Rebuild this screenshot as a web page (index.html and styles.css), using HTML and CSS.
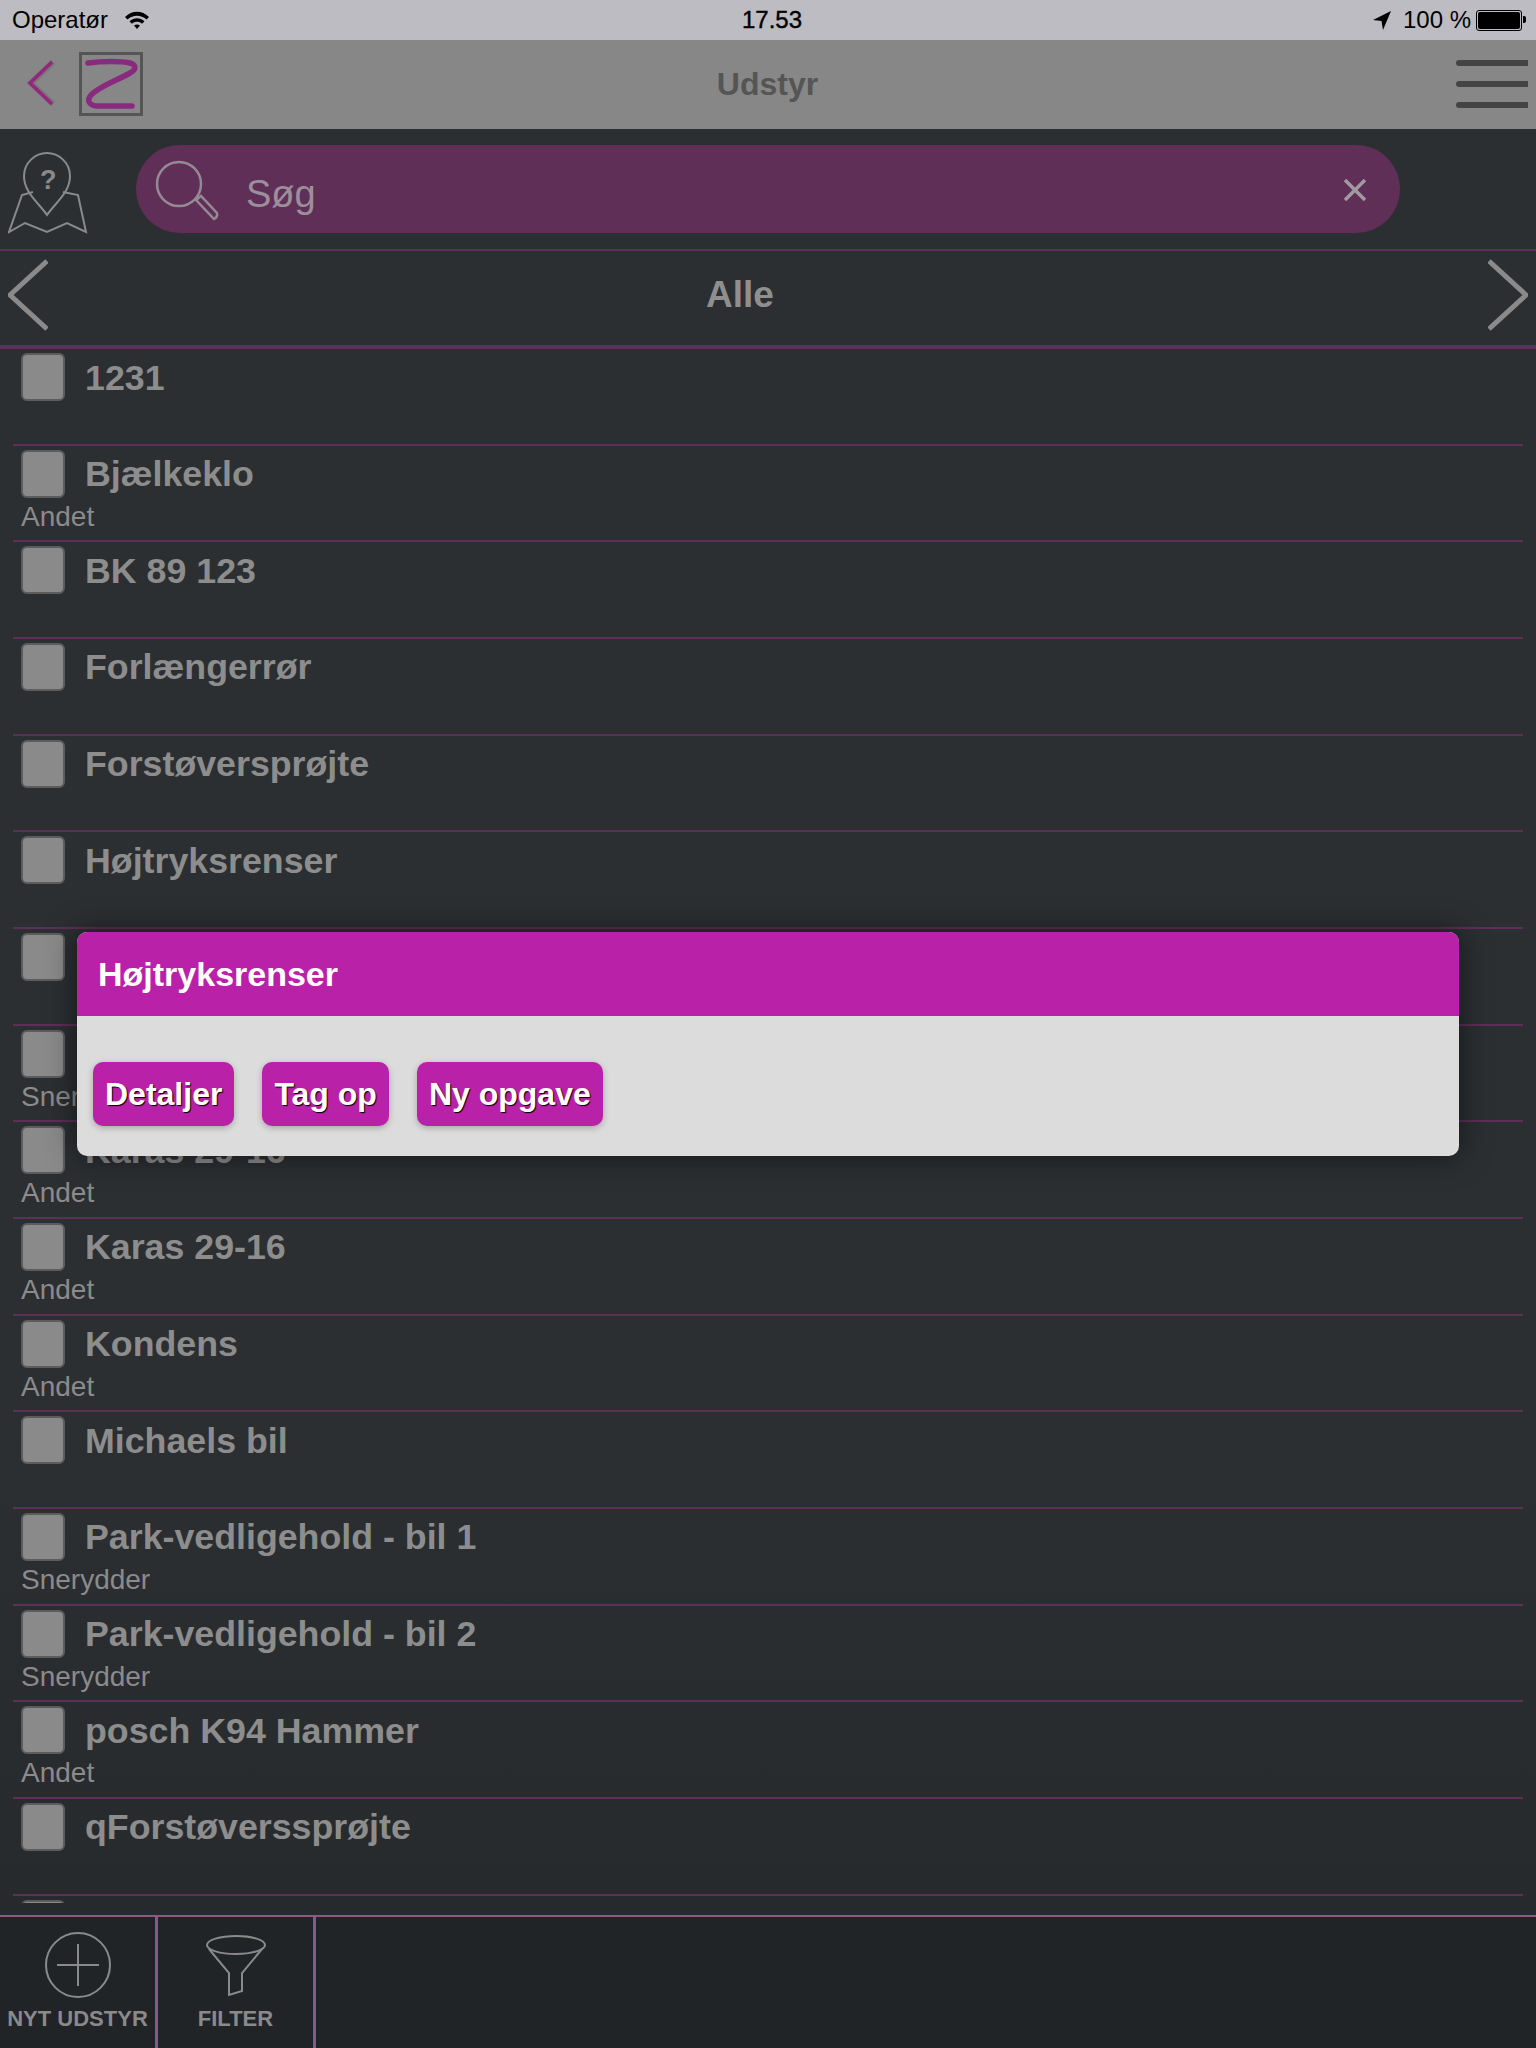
FILE: index.html
```html
<!DOCTYPE html>
<html lang="en">
<head>
    <meta charset="UTF-8">
    <meta name="viewport" content="width=device-width, initial-scale=1.0">
    <title>Udstyr</title>
    <link rel="stylesheet" href="styles.css">
</head>
<body>
    <div class="page">
        <!-- Status bar -->
        <div class="status-bar">
            <div class="status-left">
                <span>Operatør</span>
                <svg class="wifi" width="26" height="20" viewBox="0 0 26 20">
                    <path d="M1 7 C8 0 18 0 25 7 L22.500 9.500 C17 4.500 9 4.500 3.500 9.500 Z" fill="#000"/>
                    <path d="M5.500 11.300 C10 7.300 16 7.300 20.500 11.300 L18 13.800 C15 11.200 11 11.200 8 13.800 Z" fill="#000"/>
                    <path d="M10 15.500 C12 14 14 14 16 15.500 L13 19 Z" fill="#000"/>
                </svg>
            </div>
            <div class="status-time">17.53</div>
            <div class="status-right">
                <svg width="18" height="19" viewBox="0 0 18 19">
                    <path d="M18 0 L0 9 L8.500 10 L10 19 Z" fill="#000"/>
                </svg>
                <span>100 %</span>
                <div class="battery"><div class="battery-fill"></div></div>
            </div>
        </div>

        <!-- Nav bar -->
        <div class="nav-bar">
            <div class="nav-left">
                <svg class="nav-back" width="32" height="52" viewBox="0 0 32 52">
                    <path d="M27 4 L5 25 L27 46" fill="none" stroke="#6a6a6a" stroke-width="6" opacity="0.5"/>
                    <path d="M26 4 L4 25 L26 46" fill="none" stroke="#95257f" stroke-width="3.500"/>
                </svg>
                <div class="logo">
                    <svg width="58" height="58" viewBox="0 0 58 58">
                        <path d="M6 8 C20 6 40 6 48 8 C55 10 54 15 48 18 C36 25 18 31 9 40 C4 46 8 51 16 51 L50 51" fill="none" stroke="#8a2a7e" stroke-width="5.500" stroke-linecap="round"/>
                    </svg>
                </div>
            </div>
            <div class="nav-title">Udstyr</div>
            <div class="menu">
                <div class="menu-line"></div>
                <div class="menu-line"></div>
                <div class="menu-line"></div>
            </div>
        </div>

        <!-- Search -->
        <div class="search-row">
            <svg class="map-icon" width="80" height="82" viewBox="0 0 80 82">
                <path d="M39 63 C31 51 16 41 16 24 C16 11 27 1 39 1 C51 1 62 11 62 24 C62 41 47 51 39 63 Z" fill="none" stroke="#8a8a8a" stroke-width="2"/>
                <path d="M25 40 L14 43 L1 80 L17 71 L39 80 L59 71 L78 80 L70 43 L55 40" fill="none" stroke="#8a8a8a" stroke-width="2"/>
            </svg>
            <span class="map-mark">?</span>
            <div class="search-box">
                <svg class="search-icon" width="66" height="66" viewBox="0 0 66 66">
                    <circle cx="25" cy="24" r="22" fill="none" stroke="#958a94" stroke-width="2.500"/>
                    <path d="M42 40 L47 36 L63 53 Q64 57 60 59 Z" fill="none" stroke="#958a94" stroke-width="2.500"/>
                </svg>
                <span class="search-text">Søg</span>
                <svg class="search-clear" width="24" height="24" viewBox="0 0 24 24">
                    <path d="M2 2 L22 22 M22 2 L2 22" stroke="#a29aa1" stroke-width="3.500"/>
                </svg>
            </div>
        </div>

        <!-- Category header -->
        <div class="category">
            <svg width="40" height="72" viewBox="0 0 40 72">
                <path d="M39 2 L2 36 L39 70" fill="none" stroke="#8a8a8a" stroke-width="5"/>
            </svg>
            <div class="category-title">Alle</div>
            <svg width="40" height="72" viewBox="0 0 40 72">
                <path d="M1 2 L38 36 L1 70" fill="none" stroke="#8a8a8a" stroke-width="5"/>
            </svg>
        </div>

        <!-- Equipment list -->
        <div class="list">
            <div class="row"><div class="row-head"><div class="check"></div><div class="row-title">1231</div></div></div>
            <div class="row"><div class="row-head"><div class="check"></div><div class="row-title">Bjælkeklo</div></div><div class="row-sub">Andet</div></div>
            <div class="row"><div class="row-head"><div class="check"></div><div class="row-title">BK 89 123</div></div></div>
            <div class="row"><div class="row-head"><div class="check"></div><div class="row-title">Forlængerrør</div></div></div>
            <div class="row"><div class="row-head"><div class="check"></div><div class="row-title">Forstøversprøjte</div></div></div>
            <div class="row"><div class="row-head"><div class="check"></div><div class="row-title">Højtryksrenser</div></div></div>
            <div class="row"><div class="row-head"><div class="check"></div></div></div>
            <div class="row"><div class="row-head"><div class="check"></div></div><div class="row-sub">Snerydder</div></div>
            <div class="row"><div class="row-head"><div class="check"></div><div class="row-title">Karas 29-16</div></div><div class="row-sub">Andet</div></div>
            <div class="row"><div class="row-head"><div class="check"></div><div class="row-title">Karas 29-16</div></div><div class="row-sub">Andet</div></div>
            <div class="row"><div class="row-head"><div class="check"></div><div class="row-title">Kondens</div></div><div class="row-sub">Andet</div></div>
            <div class="row"><div class="row-head"><div class="check"></div><div class="row-title">Michaels bil</div></div></div>
            <div class="row"><div class="row-head"><div class="check"></div><div class="row-title">Park-vedligehold - bil 1</div></div><div class="row-sub">Snerydder</div></div>
            <div class="row"><div class="row-head"><div class="check"></div><div class="row-title">Park-vedligehold - bil 2</div></div><div class="row-sub">Snerydder</div></div>
            <div class="row"><div class="row-head"><div class="check"></div><div class="row-title">posch K94 Hammer</div></div><div class="row-sub">Andet</div></div>
            <div class="row"><div class="row-head"><div class="check"></div><div class="row-title">qForstøverssprøjte</div></div></div>
            <div class="row"><div class="row-head"><div class="check"></div></div></div>
        </div>

        <!-- Bottom toolbar -->
        <div class="toolbar">
            <div class="tool">
                <svg class="tool-icon" width="68" height="68" viewBox="0 0 68 68">
                    <circle cx="34" cy="34" r="32" fill="none" stroke="#8a8a8a" stroke-width="2"/>
                    <path d="M34 13 V55 M13 34 H55" stroke="#8a8a8a" stroke-width="2"/>
                </svg>
                <div class="tool-label">NYT UDSTYR</div>
            </div>
            <div class="tool">
                <svg class="tool-icon" width="62" height="68" viewBox="0 0 62 68">
                    <ellipse cx="31" cy="14" rx="29" ry="9" fill="none" stroke="#8a8a8a" stroke-width="2"/>
                    <path d="M4 18 L24 42 V64 L37 60 V42 L57 18" fill="none" stroke="#8a8a8a" stroke-width="2"/>
                </svg>
                <div class="tool-label">FILTER</div>
            </div>
        </div>

        <!-- Popup -->
        <div class="popup">
            <div class="popup-head">Højtryksrenser</div>
            <div class="popup-body">
                <button class="popup-btn">Detaljer</button>
                <button class="popup-btn">Tag op</button>
                <button class="popup-btn">Ny opgave</button>
            </div>
        </div>
    </div>
</body>
</html>
```

FILE: styles.css
```css
body {
    margin: 0;
    font-family: 'Liberation Sans', Arial, sans-serif;
}

.page {
    position: relative;
    display: flex;
    flex-direction: column;
    height: 2048px;
    overflow: hidden;
    background: linear-gradient(#2c2f32 70%, #26292c);
}

/* Status bar */
.status-bar {
    display: flex;
    align-items: center;
    justify-content: space-between;
    height: 40px;
    padding: 0 11px 0 12px;
    background-color: #bdbcc2;
    color: #000;
    font-size: 24px;
}

.status-left {
    display: flex;
    align-items: center;
    gap: 16px;
    width: 500px;
}

.status-time {
    font-weight: 500;
    -webkit-text-stroke: 0.4px #000;
    margin-left: 7px;
}

.status-right {
    display: flex;
    align-items: center;
    justify-content: flex-end;
    gap: 5px;
    width: 500px;
}

.status-right svg {
    margin-right: 7px;
}

.battery {
    position: relative;
    width: 42px;
    height: 17px;
    padding: 1px;
    margin-right: 3px;
    border: 1px solid #000;
    border-radius: 3px;
}

.battery::after {
    content: '';
    position: absolute;
    top: 5px;
    right: -5px;
    width: 3px;
    height: 7px;
    background-color: #000;
    border-radius: 0 2px 2px 0;
}

.battery-fill {
    height: 100%;
    background-color: #000;
    border-radius: 2px;
}

/* Nav bar */
.nav-bar {
    display: flex;
    align-items: center;
    justify-content: space-between;
    height: 89px;
    padding-right: 8px;
    background-color: #878787;
}

.nav-left {
    display: flex;
    align-items: center;
    gap: 21px;
    width: 300px;
    padding-left: 26px;
    box-sizing: border-box;
}

.nav-back {
    margin-top: -1px;
}

.logo {
    width: 58px;
    height: 58px;
    margin-top: -2px;
    border: 3px solid #555;
}

.logo svg {
    display: block;
}

.nav-title {
    margin-left: 7px;
    color: #555;
    font-size: 32px;
    font-weight: bold;
}

.menu {
    display: flex;
    flex-direction: column;
    gap: 15px;
    width: 72px;
    margin-top: -2px;
    margin-left: 228px;
}

.menu-line {
    height: 6px;
    background-color: #444;
    border-radius: 3px 0 0 3px;
}

/* Search */
.search-row {
    position: relative;
    display: flex;
    align-items: center;
    height: 122px;
    padding-left: 8px;
    box-sizing: border-box;
    border-bottom: 2px solid #5e2f58;
}

.map-icon {
    margin-top: 8px;
}

.map-mark {
    position: absolute;
    top: 36px;
    left: 40px;
    color: #8a8a8a;
    font-size: 27px;
    font-weight: bold;
}

.search-box {
    display: flex;
    align-items: center;
    width: 1264px;
    height: 88px;
    margin-left: 48px;
    background-color: #5f2f58;
    border-radius: 44px;
}

.search-icon {
    margin-left: 18px;
    margin-top: 8px;
}

.search-text {
    margin-left: 26px;
    margin-top: 10px;
    color: #9c8f9b;
    font-size: 38px;
}

.search-clear {
    margin-left: auto;
    margin-right: 33px;
    margin-top: 2px;
}

/* Category header */
.category {
    display: flex;
    align-items: center;
    justify-content: space-between;
    height: 88px;
    padding: 0 8px 6px;
    border-bottom: 4px solid #5e2f58;
}

.category-title {
    margin-left: -56px;
    color: #8f8f8f;
    font-size: 37px;
    font-weight: bold;
}

/* Equipment list */
.list {
    height: 1554px;
    overflow: hidden;
}

.row {
    height: 96.67px;
    box-sizing: border-box;
    margin: 0 13px;
    padding: 4px 0 0 8px;
    border-bottom: 2px solid #5e2f58;
}

.row-head {
    display: flex;
    align-items: center;
    gap: 20px;
}

.check {
    width: 44px;
    height: 48px;
    box-sizing: border-box;
    background-color: #8a8a8a;
    border: 2px solid #5c5c5c;
    border-radius: 6px;
}

.row-title {
    padding-top: 2px;
    color: #8d8d8d;
    font-size: 35.750px;
    font-weight: bold;
}

.row-sub {
    margin-top: 3px;
    color: #8b8b8b;
    font-size: 28px;
}

/* Bottom toolbar */
.toolbar {
    display: flex;
    flex: 1;
    margin-top: 12px;
    background-color: #212427;
    border-top: 2px solid #8a5a85;
}

.tool {
    display: flex;
    flex-direction: column;
    align-items: center;
    width: 155px;
    padding-top: 14px;
    border-right: 3px solid #8a5a85;
}

.tool-label {
    margin-top: 7px;
    color: #8a8a8a;
    font-size: 22px;
    font-weight: bold;
    white-space: nowrap;
}

/* Popup */
.popup {
    position: absolute;
    top: 932px;
    left: 77px;
    width: 1382px;
    height: 224px;
    overflow: hidden;
    background-color: #dcdcdc;
    border-radius: 10px;
    box-shadow: 0 0 30px rgba(0, 0, 0, 0.55);
}

.popup-head {
    height: 84px;
    line-height: 84px;
    padding-left: 21px;
    background-color: #b922a8;
    color: #fff;
    font-size: 34px;
    font-weight: bold;
}

.popup-body {
    display: flex;
    gap: 28px;
    padding: 46px 0 0 16px;
}

.popup-btn {
    height: 64px;
    padding: 0 12px;
    background-color: #b922a8;
    border: none;
    border-radius: 10px;
    box-shadow: 0 2px 6px rgba(0, 0, 0, 0.25);
    color: #fff;
    font-family: inherit;
    font-size: 32px;
    font-weight: bold;
    text-shadow: 1px 1px 1px #000;
}
```
